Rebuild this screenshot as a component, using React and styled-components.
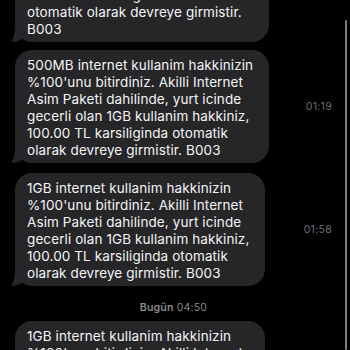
import React from "react";
import styled, { createGlobalStyle } from "styled-components";

const Global = createGlobalStyle`
  html, body { margin: 0; padding: 0; background: #000; }
  body { font-family: "Inter", "Noto Sans", sans-serif; -webkit-font-smoothing: antialiased; }
`;

const Viewport = styled.div`
  position: relative;
  width: 350px;
  height: 350px;
  overflow: hidden;
  background: #000;
`;

const Thread = styled.div`
  display: flex;
  flex-direction: column;
  padding: 0 18px 0 15px;
  margin-top: ${(p) => p.$offset}px;
`;

const Row = styled.div`
  display: flex;
  align-items: center;
  justify-content: space-between;
  margin-top: ${(p) => p.$gap || 0}px;
`;

const Bubble = styled.div`
  position: relative;
  isolation: isolate;
  background: #262628;
  color: #f4f4f6;
  border-radius: 17px;
  padding: 7px 16px 4px 12px;
  font-size: 13.5px;
  line-height: 17px;
  letter-spacing: 0.1px;
  white-space: pre-line;
`;

const TailSvg = styled.svg`
  position: absolute;
  z-index: -1;
  left: -4px;
  bottom: 0;
  width: 20px;
  height: 17px;
`;

const Time = styled.span`
  font-size: 10.5px;
  color: #6d6d72;
  letter-spacing: 0.3px;
`;

const DateLabel = styled.div`
  text-align: center;
  font-size: 10.5px;
  line-height: 14px;
  color: #8a8a8f;
  margin: 15px 0 6px;
  letter-spacing: 0.2px;
  b { font-weight: 600; }
`;

const ScrollBar = styled.div`
  position: absolute;
  right: 3px;
  top: 20px;
  bottom: 0;
  width: 2px;
  border-radius: 1px;
  background: #7c7c7c;
`;

const Tail = () => (
  <TailSvg viewBox="0 0 20 17">
    <path d="M4 0 C4 8 3 13 0 16.6 C5 17.2 9.5 15.5 12 13 L20 13 L20 0 Z" fill="#262628" />
  </TailSvg>
);

const msg500 =
  "500MB internet kullanim hakkinizin\n%100'unu bitirdiniz. Akilli Internet\nAsim Paketi dahilinde, yurt icinde\ngecerli olan 1GB kullanim hakkiniz,\n100.00 TL karsiliginda otomatik\nolarak devreye girmistir. B003";
const msg1gb =
  "1GB internet kullanim hakkinizin\n%100'unu bitirdiniz. Akilli Internet\nAsim Paketi dahilinde, yurt icinde\ngecerli olan 1GB kullanim hakkiniz,\n100.00 TL karsiliginda otomatik\nolarak devreye girmistir. B003";
const msgFirst =
  "500MB internet kullanim hakkinizin\n%100'unu bitirdiniz. Akilli Internet\nAsim Paketi dahilinde, yurt icinde\ngecerli olan 1GB kullanim hakkiniz,\n100.00 TL karsiliginda\notomatik olarak devreye girmistir.\nB003";

export default function App() {
  return (
    <Viewport>
      <Global />
      <Thread $offset={-88}>
        <Row>
          <Bubble>
            {msgFirst}
            <Tail />
          </Bubble>
        </Row>
        <Row $gap={8}>
          <Bubble>
            {msg500}
            <Tail />
          </Bubble>
          <Time>01:19</Time>
        </Row>
        <Row $gap={10}>
          <Bubble>
            {msg1gb}
            <Tail />
          </Bubble>
          <Time>01:58</Time>
        </Row>
        <DateLabel>
          <b>Bugün</b> 04:50
        </DateLabel>
        <Row>
          <Bubble>
            {msg1gb}
            <Tail />
          </Bubble>
        </Row>
      </Thread>
      <ScrollBar />
    </Viewport>
  );
}
